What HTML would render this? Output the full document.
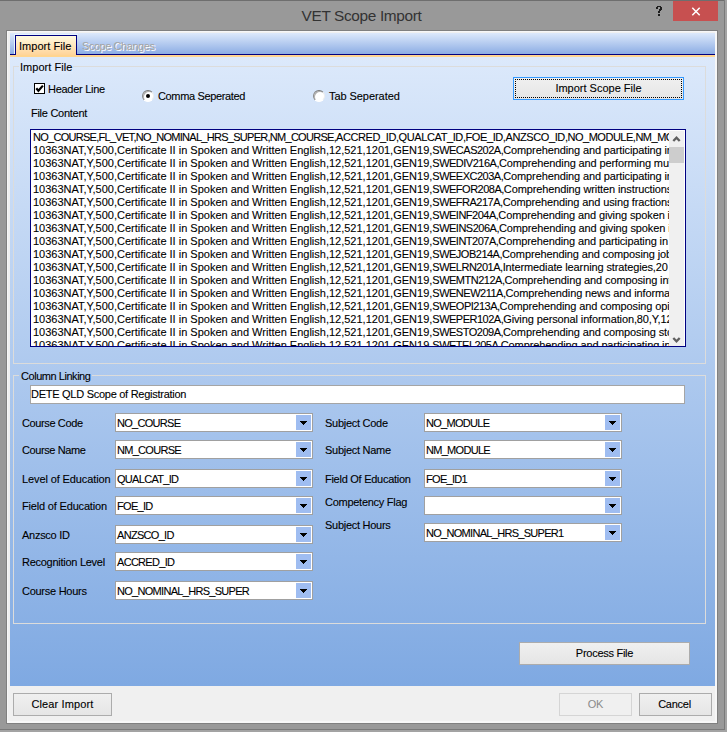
<!DOCTYPE html>
<html><head><meta charset="utf-8">
<style>
*{margin:0;padding:0;box-sizing:border-box}
html,body{width:727px;height:732px;overflow:hidden;background:#999999}
body{position:relative;font-family:"Liberation Sans",sans-serif;font-size:11px;letter-spacing:-0.27px;color:#000;-webkit-text-stroke:0.1px currentColor}
.a{position:absolute}
.t{position:absolute;white-space:nowrap;line-height:13px}
#topline{left:0;top:0;width:727px;height:1px;background:#6e6e6e}
#title{left:-2px;top:6px;width:727px;text-align:center;font-size:15.4px;letter-spacing:-0.35px;color:#333;line-height:20px;-webkit-text-stroke:0}
#help{left:655px;top:4px;font-size:13px;font-weight:bold;color:#222;line-height:16px}
#close{left:673px;top:1px;width:45px;height:20px;background:#c75050}
/* frame lines */
#fr1{left:724px;top:0;width:1px;height:730px;background:#7a7a7a}
#fr1b{left:725px;top:0;width:2px;height:732px;background:#a3a3a3}
#fr2{left:0;top:729px;width:725px;height:1px;background:#7a7a7a}
#fr2b{left:0;top:730px;width:727px;height:2px;background:#a3a3a3}
#client{left:6px;top:30px;width:712px;height:694px;background:#808080}
#clientin{left:7px;top:31px;width:710px;height:692px;background:#f7f7f7}
#clientin2{left:8px;top:32px;width:707px;height:689px;background:#f0f0f0}
/* tab control */
#strip{left:10px;top:33px;width:705px;height:21px;background:linear-gradient(#dde9fb,#8cade4)}
#navy{left:10px;top:54px;width:705px;height:1px;background:#000080}
#orange{left:10px;top:55px;width:705px;height:2px;background:#ffd590}
#tabsel{left:15px;top:35px;width:62px;height:20px;border:1px solid #000080;border-bottom:none;background:linear-gradient(#fffae0,#ffd49a)}
#tabhl{left:14px;top:34px;width:64px;height:20px;border:1px solid #e8f4ff;border-bottom:none;border-right:none}
#page{left:10px;top:57px;width:705px;height:629px;background:linear-gradient(#dce9fb,#7fa9e2)}
.grp{position:absolute;border:1px solid #dcdcdb}
.lblbg{position:absolute;padding:0 2px}
.btn{position:absolute;border:1px solid #acacac;background:linear-gradient(#f0f0f0,#e5e5e5);text-align:center;line-height:21px}
.tb{position:absolute;background:#fff;border:1px solid #a5a5a5}
.cb{position:absolute;background:#fff;border:1px solid #a0a0a0;width:198px;height:19px}
.cb .v{position:absolute;left:1px;top:3px;letter-spacing:-0.7px;line-height:13px;white-space:nowrap}
.cb .dd{position:absolute;right:1px;top:1px;width:15px;height:15px;background:#9fbdf1}
.cb .dd:after{content:"";position:absolute;left:4px;top:6px;width:7px;height:4px;background:#000;clip-path:polygon(0 0,7px 0,7px 1px,6px 1px,6px 2px,5px 2px,5px 3px,4px 3px,4px 4px,3px 4px,3px 3px,2px 3px,2px 2px,1px 2px,1px 1px,0 1px)}
#fc{left:30px;top:129px;width:656px;height:218px;border:1px solid #000080;background:#fff;overflow:hidden}
#fctext{position:absolute;left:2px;top:1px;width:636px;height:215px;overflow:hidden;line-height:13px;white-space:pre;letter-spacing:-0.1px}
#fctext .l0{letter-spacing:-0.565px}
#fctext .pa{letter-spacing:0}
#fctext .pb{letter-spacing:-0.5px}
#fctext .pc{letter-spacing:-0.12px}
#sb{position:absolute;left:638px;top:1px;width:15px;height:215px;background:#f0f0f0}
</style></head><body>
<div class="a" id="topline"></div>
<div class="t" id="title">VET Scope Import</div>
<svg class="a" style="left:650px;top:0" width="20" height="22" shape-rendering="crispEdges"><g fill="#1e1e1e"><rect x="7" y="6" width="4" height="1"/><rect x="6" y="7" width="2" height="2"/><rect x="10" y="7" width="2" height="3"/><rect x="9" y="9" width="3" height="1"/><rect x="9" y="10" width="2" height="1"/><rect x="8" y="11" width="2" height="2"/><rect x="8" y="14" width="2" height="2"/></g></svg>
<div class="a" id="close"><svg width="45" height="20" style="position:absolute;left:0;top:0"><path d="M19.3 6.8 L26.7 14.2 M26.7 6.8 L19.3 14.2" stroke="#fff" stroke-width="1.5"/></svg></div>
<div class="a" id="fr1"></div><div class="a" id="fr1b"></div>
<div class="a" id="fr2"></div><div class="a" id="fr2b"></div>
<div class="a" id="client"></div>
<div class="a" id="clientin"></div>
<div class="a" id="clientin2"></div>

<div class="a" id="strip"></div>
<div class="a" id="navy"></div>
<div class="a" id="orange"></div>
<div class="a" id="tabhl"></div>
<div class="a" id="tabsel"></div>
<div class="t" style="left:19px;top:40px;letter-spacing:0.03px">Import File</div>
<div class="t" style="left:83px;top:41px;color:#fff;-webkit-text-stroke:0;letter-spacing:-0.45px">Scope Changes</div>
<div class="t" style="left:82px;top:40px;color:#a3a3a3;-webkit-text-stroke:0;letter-spacing:-0.45px">Scope Changes</div>
<div class="a" id="page"></div>

<!-- group 1 -->
<div class="grp" style="left:13px;top:66px;width:693px;height:298px"></div>
<div class="t" style="left:19px;top:61px;padding:0 1px;letter-spacing:0.03px;background:#dce9fb">Import File</div>
<div class="a" style="left:34px;top:83px;width:11px;height:11px;border:1px solid #000;background:#fff"><svg width="9" height="9" style="position:absolute;left:0;top:0"><path d="M1.3 4.3 L3.4 6.8 L7.9 1.6" stroke="#000" stroke-width="2.2" fill="none"/></svg></div>
<div class="t" style="left:48px;top:83px">Header Line</div>
<div class="a" style="left:142px;top:90px;width:12px;height:12px;border-radius:50%;background:#fff;border:1px solid;border-color:#777 #eee #fff #888;box-shadow:inset 1px 1px 0 #b0b0b0"><div class="a" style="left:3px;top:3px;width:4px;height:4px;border-radius:50%;background:#000"></div></div>
<div class="t" style="left:158px;top:90px;letter-spacing:-0.356px">Comma Seperated</div>
<div class="a" style="left:313px;top:90px;width:12px;height:12px;border-radius:50%;background:#fff;border:1px solid;border-color:#777 #eee #fff #888;box-shadow:inset 1px 1px 0 #b0b0b0"></div>
<div class="t" style="left:329px;top:90px;letter-spacing:-0.062px">Tab Seperated</div>
<div class="t" style="left:31px;top:107px">File Content</div>
<div class="btn" style="left:513px;top:77px;width:171px;height:23px;border-color:#3399ff;letter-spacing:0"><div class="a" style="left:1px;top:1px;right:1px;bottom:1px;border:1px dotted #000"></div>Import Scope File</div>

<div class="a" id="fc"><div id="fctext"><div class="l0"><span style="letter-spacing:-0.717px">NO_COURSE,FL_VET,NO_NOMINAL_HRS_SUPER,NM_COURSE,</span><span style="letter-spacing:-0.4px">ACCRED_ID,QUALCAT_ID,FOE_ID,ANZSCO_ID,</span><span style="letter-spacing:-0.49px">NO_MODULE,NM_MODULE</span></div><div><span class="pa">10363NAT,Y,500,Certificate II in Spoken and Written English,12,521,1201,GEN19,</span><span class="pb">SWECAS202A,</span><span class="pc">Comprehending and participating in</span></div><div><span class="pa">10363NAT,Y,500,Certificate II in Spoken and Written English,12,521,1201,GEN19,</span><span class="pb">SWEDIV216A,</span><span class="pc">Comprehending and performing multiple</span></div><div><span class="pa">10363NAT,Y,500,Certificate II in Spoken and Written English,12,521,1201,GEN19,</span><span class="pb">SWEEXC203A,</span><span class="pc">Comprehending and participating in</span></div><div><span class="pa">10363NAT,Y,500,Certificate II in Spoken and Written English,12,521,1201,GEN19,</span><span class="pb">SWEFOR208A,</span><span class="pc">Comprehending written instructions</span></div><div><span class="pa">10363NAT,Y,500,Certificate II in Spoken and Written English,12,521,1201,GEN19,</span><span class="pb">SWEFRA217A,</span><span class="pc">Comprehending and using fractions</span></div><div><span class="pa">10363NAT,Y,500,Certificate II in Spoken and Written English,12,521,1201,GEN19,</span><span class="pb">SWEINF204A,</span><span class="pc">Comprehending and giving spoken instructions</span></div><div><span class="pa">10363NAT,Y,500,Certificate II in Spoken and Written English,12,521,1201,GEN19,</span><span class="pb">SWEINS206A,</span><span class="pc">Comprehending and giving spoken instructions</span></div><div><span class="pa">10363NAT,Y,500,Certificate II in Spoken and Written English,12,521,1201,GEN19,</span><span class="pb">SWEINT207A,</span><span class="pc">Comprehending and participating in</span></div><div><span class="pa">10363NAT,Y,500,Certificate II in Spoken and Written English,12,521,1201,GEN19,</span><span class="pb">SWEJOB214A,</span><span class="pc">Comprehending and composing job</span></div><div><span class="pa">10363NAT,Y,500,Certificate II in Spoken and Written English,12,521,1201,GEN19,</span><span class="pb">SWELRN201A,</span><span class="pc">Intermediate learning strategies,20</span></div><div><span class="pa">10363NAT,Y,500,Certificate II in Spoken and Written English,12,521,1201,GEN19,</span><span class="pb">SWEMTN212A,</span><span class="pc">Comprehending and composing information</span></div><div><span class="pa">10363NAT,Y,500,Certificate II in Spoken and Written English,12,521,1201,GEN19,</span><span class="pb">SWENEW211A,</span><span class="pc">Comprehending news and information</span></div><div><span class="pa">10363NAT,Y,500,Certificate II in Spoken and Written English,12,521,1201,GEN19,</span><span class="pb">SWEOPI213A,</span><span class="pc">Comprehending and composing opinion</span></div><div><span class="pa">10363NAT,Y,500,Certificate II in Spoken and Written English,12,521,1201,GEN19,</span><span class="pb">SWEPER102A,</span><span class="pc">Giving personal information,80,Y,12</span></div><div><span class="pa">10363NAT,Y,500,Certificate II in Spoken and Written English,12,521,1201,GEN19,</span><span class="pb">SWESTO209A,</span><span class="pc">Comprehending and composing stories</span></div><div><span class="pa">10363NAT,Y,500,Certificate II in Spoken and Written English,12,521,1201,GEN19,</span><span class="pb">SWETEL205A,</span><span class="pc">Comprehending and participating in</span></div></div>
<div id="sb">
<svg width="15" height="215" style="position:absolute;left:0;top:0"><path d="M4.3 10 L7.5 6.6 L10.7 10" stroke="#606060" stroke-width="2.3" fill="none"/><rect x="0" y="16" width="15" height="16" fill="#cdcdcd"/><path d="M4.3 207 L7.5 210.4 L10.7 207" stroke="#606060" stroke-width="2.3" fill="none"/></svg>
</div>
</div>

<!-- group 2 -->
<div class="grp" style="left:13px;top:375px;width:693px;height:249px"></div>
<div class="t" style="left:19px;top:370px;letter-spacing:-0.455px;padding:0 2px;background:#adc9ee">Column Linking</div>
<div class="tb" style="left:30px;top:385px;width:655px;height:19px"><div class="t" style="left:0px;top:2px">DETE QLD Scope of Registration</div></div>

<div class="t" style="left:22px;top:417px;letter-spacing:-0.380px">Course Code</div>
<div class="cb" style="left:115px;top:413px"><div class="v">NO_COURSE</div><div class="dd"></div></div>
<div class="t" style="left:22px;top:444px;letter-spacing:-0.400px">Course Name</div>
<div class="cb" style="left:115px;top:440px"><div class="v">NM_COURSE</div><div class="dd"></div></div>
<div class="t" style="left:22px;top:473px;letter-spacing:-0.111px">Level of Education</div>
<div class="cb" style="left:115px;top:469px"><div class="v">QUALCAT_ID</div><div class="dd"></div></div>
<div class="t" style="left:22px;top:500px;letter-spacing:-0.176px">Field of Education</div>
<div class="cb" style="left:115px;top:496px"><div class="v">FOE_ID</div><div class="dd"></div></div>
<div class="t" style="left:22px;top:529px">Anzsco ID</div>
<div class="cb" style="left:115px;top:525px"><div class="v">ANZSCO_ID</div><div class="dd"></div></div>
<div class="t" style="left:22px;top:556px">Recognition Level</div>
<div class="cb" style="left:115px;top:552px"><div class="v">ACCRED_ID</div><div class="dd"></div></div>
<div class="t" style="left:22px;top:585px">Course Hours</div>
<div class="cb" style="left:115px;top:581px"><div class="v">NO_NOMINAL_HRS_SUPER</div><div class="dd"></div></div>

<div class="t" style="left:325px;top:417px">Subject Code</div>
<div class="cb" style="left:424px;top:413px"><div class="v">NO_MODULE</div><div class="dd"></div></div>
<div class="t" style="left:325px;top:444px">Subject Name</div>
<div class="cb" style="left:424px;top:440px"><div class="v">NM_MODULE</div><div class="dd"></div></div>
<div class="t" style="left:325px;top:473px">Field Of Education</div>
<div class="cb" style="left:424px;top:469px"><div class="v">FOE_ID1</div><div class="dd"></div></div>
<div class="t" style="left:325px;top:496px">Competency Flag</div>
<div class="cb" style="left:424px;top:496px"><div class="v"></div><div class="dd"></div></div>
<div class="t" style="left:325px;top:519px">Subject Hours</div>
<div class="cb" style="left:424px;top:523px"><div class="v">NO_NOMINAL_HRS_SUPER1</div><div class="dd"></div></div>

<div class="btn" style="left:519px;top:642px;width:171px;height:23px">Process File</div>

<!-- footer -->
<div class="btn" style="left:13px;top:693px;width:99px;height:23px;letter-spacing:0.13px">Clear Import</div>
<div class="btn" style="left:559px;top:693px;width:73px;height:23px;border-color:#d5d5d5;color:#8a8a8a;background:#f0f0f0;-webkit-text-stroke:0">OK</div>
<div class="btn" style="left:639px;top:693px;width:73px;height:23px;text-indent:-2px">Cancel</div>
</body></html>
